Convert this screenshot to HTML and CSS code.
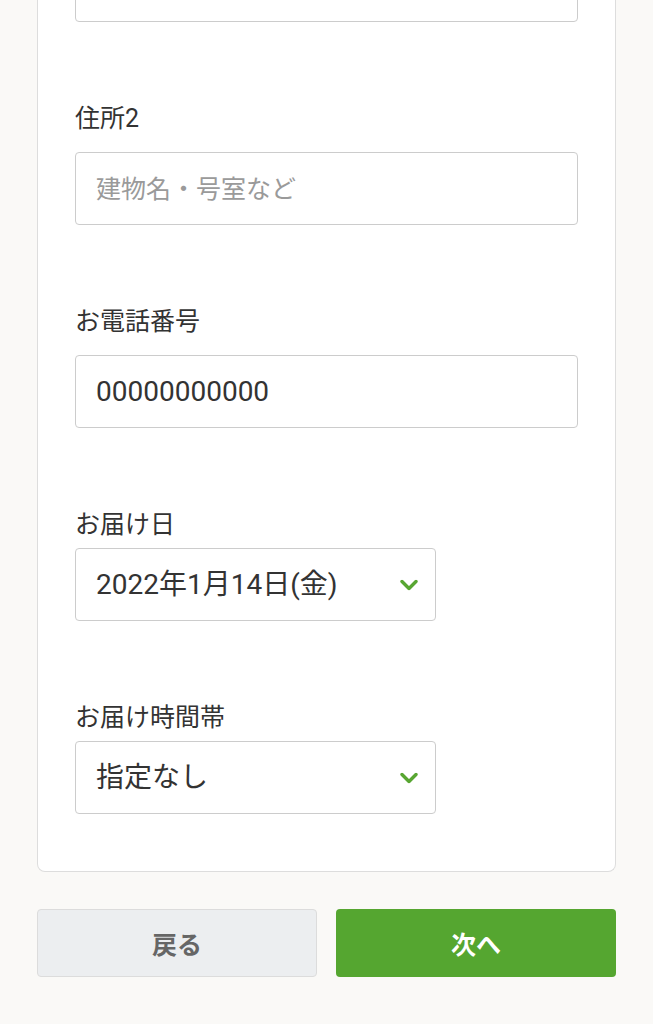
FILE: index.html
```html
<!DOCTYPE html>
<html lang="ja">
<head>
    <meta charset="UTF-8">
    <meta name="viewport" content="width=device-width, initial-scale=1.0">
    <title>お届け先の入力</title>
    <link rel="stylesheet" href="styles.css">
</head>
<body>
    <div class="page">
        <form class="card" id="addressForm">
            <div class="form-group first">
                <input type="text" id="address1" value="">
            </div>
            <div class="form-group">
                <label for="address2">住所2</label>
                <input type="text" id="address2" placeholder="建物名・号室など">
            </div>
            <div class="form-group">
                <label for="tel">お電話番号</label>
                <input type="tel" id="tel" value="00000000000">
            </div>
            <div class="form-group select-group">
                <label for="date">お届け日</label>
                <div class="select-wrap">
                    <select id="date">
                        <option>2022年1月14日(金)</option>
                        <option>2022年1月15日(土)</option>
                        <option>2022年1月16日(日)</option>
                    </select>
                    <svg class="chevron" viewBox="0 0 18 11" width="18" height="11">
                        <polyline points="2,2 9,9 16,2" fill="none" stroke="#58a632" stroke-width="3.4" stroke-linecap="round" stroke-linejoin="round"/>
                    </svg>
                </div>
            </div>
            <div class="form-group select-group">
                <label for="time">お届け時間帯</label>
                <div class="select-wrap">
                    <select id="time">
                        <option>指定なし</option>
                        <option>午前中</option>
                        <option>14時〜16時</option>
                        <option>16時〜18時</option>
                    </select>
                    <svg class="chevron" viewBox="0 0 18 11" width="18" height="11">
                        <polyline points="2,2 9,9 16,2" fill="none" stroke="#58a632" stroke-width="3.4" stroke-linecap="round" stroke-linejoin="round"/>
                    </svg>
                </div>
            </div>
        </form>

        <div class="actions">
            <button type="button" class="btn-back">戻る</button>
            <button type="submit" form="addressForm" class="btn-next">次へ</button>
        </div>
    </div>
</body>
</html>
```
FILE: styles.css
```css
body {
    font-family: Roboto, "Noto Sans CJK JP", sans-serif;
    margin: 0;
    background-color: #faf9f7;
    color: #333;
}
.page {
    padding: 0 37px;
    margin-top: -51px;
}
.card {
    background-color: #fff;
    border: 1px solid #ddd;
    border-top: none;
    border-radius: 0 0 8px 8px;
    padding: 0 37px 57px 37px;
}
.form-group {
    margin-top: 81px;
}
.form-group.first {
    margin-top: 0;
}
.form-group label {
    display: block;
    font-size: 25px;
    line-height: 32px;
    margin-bottom: 17px;
    color: #333;
}
.select-group label {
    margin-bottom: 7px;
}
.form-group input,
.form-group select {
    display: block;
    box-sizing: border-box;
    width: 100%;
    height: 73px;
    padding: 0 20px;
    border: 1px solid #ccc;
    border-radius: 4px;
    background-color: #fff;
    font-family: Roboto, "Noto Sans CJK JP", sans-serif;
    font-size: 28px;
    color: #333;
    outline: none;
}
.form-group input::placeholder {
    color: #9a9a9a;
    font-size: 25px;
}
.select-wrap {
    position: relative;
    width: 361px;
}
.select-wrap select {
    appearance: none;
    -webkit-appearance: none;
}
.chevron {
    position: absolute;
    right: 18px;
    top: 50%;
    transform: translateY(-50%);
    pointer-events: none;
}
.actions {
    display: grid;
    grid-template-columns: 1fr 1fr;
    gap: 19px;
    margin-top: 37px;
}
button {
    height: 68px;
    border-radius: 4px;
    font-family: Roboto, "Noto Sans CJK JP", sans-serif;
    font-size: 25px;
    font-weight: bold;
    cursor: pointer;
}
.btn-back {
    background-color: #eceef0;
    border: 1px solid #dcdcdc;
    color: #666;
}
.btn-next {
    background-color: #55a630;
    border: none;
    color: #fff;
}
.btn-next:hover {
    background-color: #4a952a;
}
```
